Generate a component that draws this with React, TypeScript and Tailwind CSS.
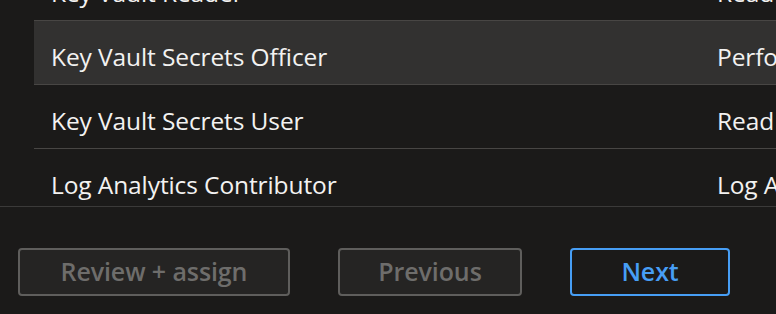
const rows = [
  { name: "Key Vault Reader", desc: "Read metadata of key vaults and its certificates, keys, and secrets." },
  { name: "Key Vault Secrets Officer", desc: "Perform any action on the secrets of a key vault.", selected: true },
  { name: "Key Vault Secrets User", desc: "Read secret contents." },
  { name: "Log Analytics Contributor", desc: "Log Analytics Contributor can read all monitoring data." },
];

export default function App() {
  return (
    <div
      className="w-[776px] h-[314px] bg-[#1b1a19] text-[#f3f2f1] overflow-hidden flex flex-col"
      style={{ fontFamily: '"Open Sans", "Noto Sans", sans-serif' }}
    >
      <div className="h-[206px] overflow-hidden pl-[34px]">
        <div className="-mt-[43px]">
          {rows.map((r) => (
            <div
              key={r.name}
              className={`h-[64px] flex items-center pt-[9px] border-b border-[#484644] text-[24.5px] leading-[30px] whitespace-nowrap ${
                r.selected ? "bg-[#323130]" : ""
              }`}
            >
              <div className="w-[683px] shrink-0 pl-[17px] tracking-[-0.1px]">{r.name}</div>
              <div className="shrink-0 tracking-[-0.1px]">{r.desc}</div>
            </div>
          ))}
        </div>
      </div>
      <div className="border-t border-[#3b3a39] flex-1 flex items-start pt-[41px] pl-[18px] gap-[48px]">
        <button className="w-[272px] h-[48px] rounded-[4px] border-2 border-[#5f5e5c] bg-[#252423] text-[#6e6d6b] text-[25px] leading-[30px] pb-[2px] font-semibold tracking-[-0.1px]">
          Review + assign
        </button>
        <button className="w-[184px] h-[48px] rounded-[4px] border-2 border-[#5f5e5c] bg-[#252423] text-[#6e6d6b] text-[25px] leading-[30px] pb-[2px] font-semibold tracking-[-0.1px]">
          Previous
        </button>
        <button className="w-[160px] h-[48px] rounded-[4px] border-2 border-[#479ef5] text-[#479ef5] text-[25px] leading-[30px] pb-[2px] font-semibold tracking-[-0.1px]">
          Next
        </button>
      </div>
    </div>
  );
}
